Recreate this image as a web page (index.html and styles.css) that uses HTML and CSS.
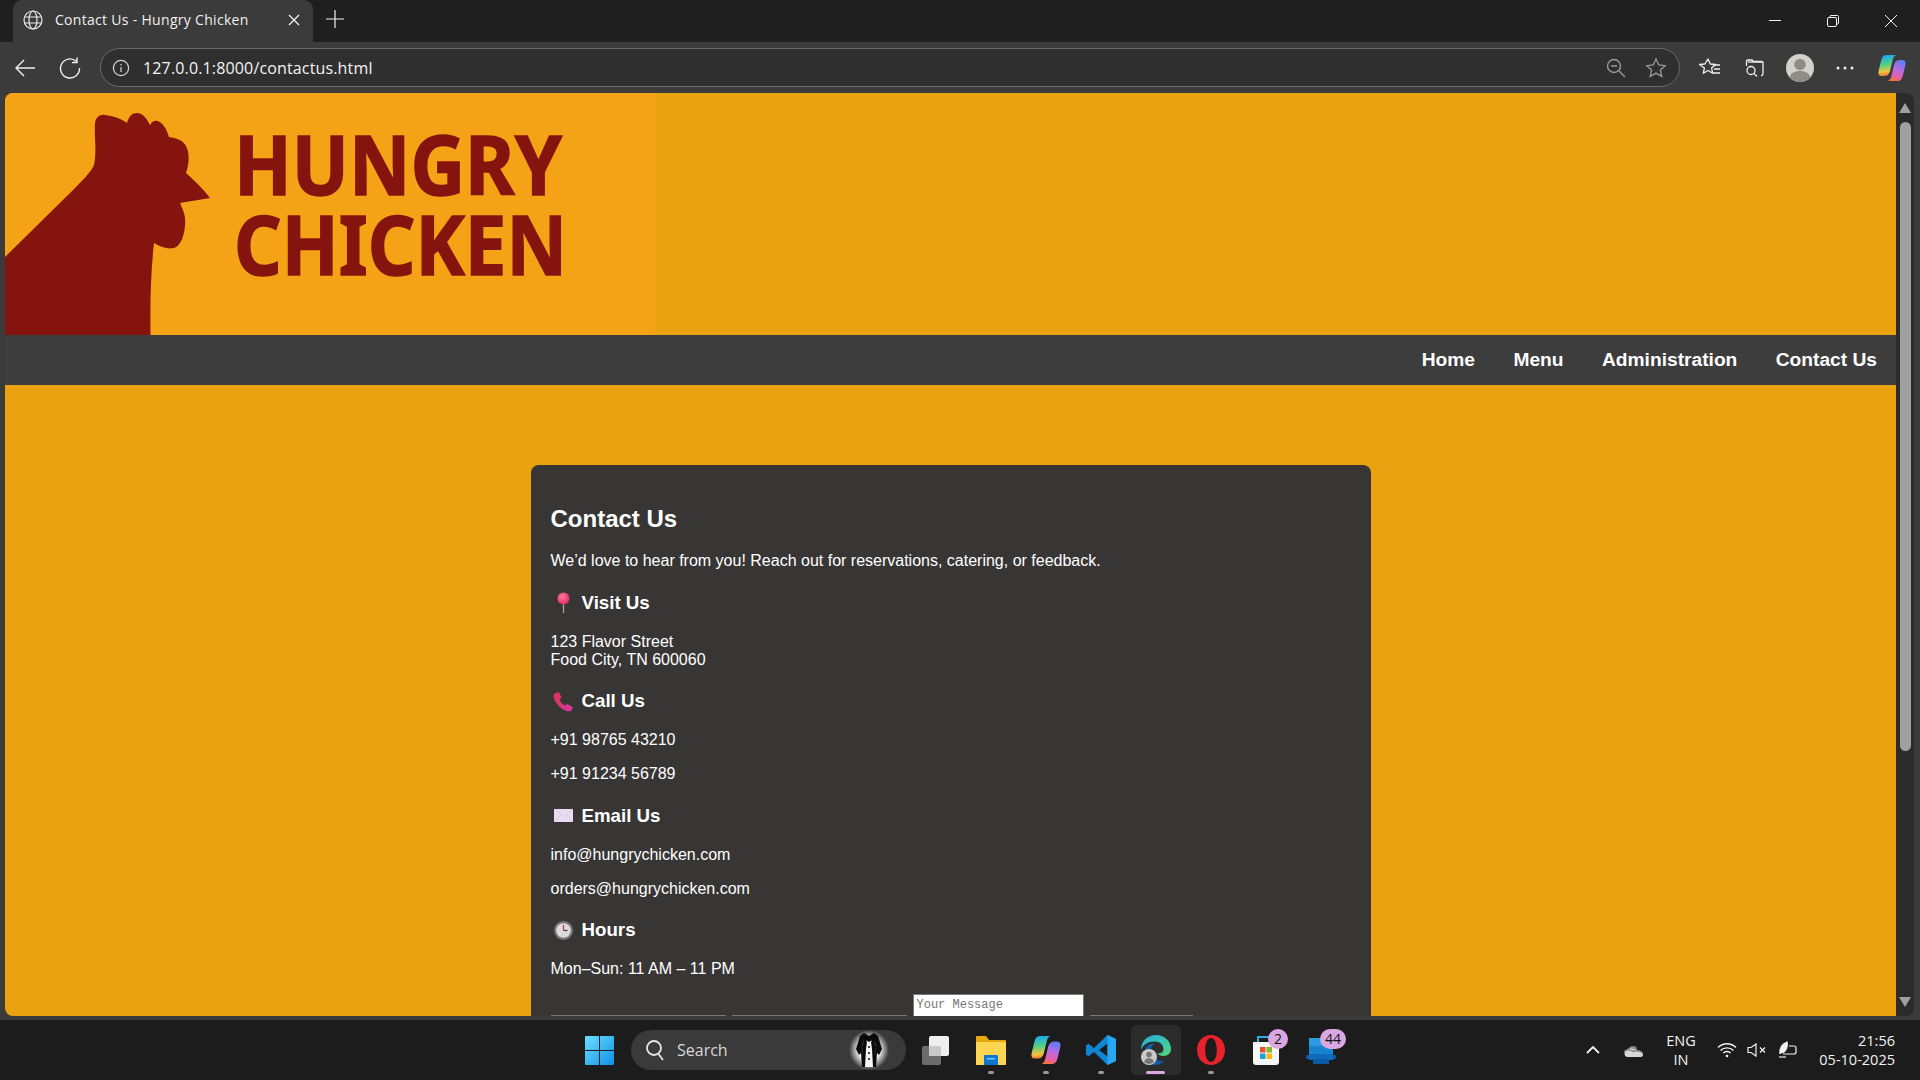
FILE: index.html
```html
<!DOCTYPE html>
<html lang="en">

<head>
    <meta charset="UTF-8">
    <title>Contact Us - Hungry Chicken</title>
    <link rel="stylesheet" href="styles.css">
</head>

<body>
    <div class="window">

        <!-- TAB STRIP -->
        <div class="tabstrip">
            <div class="tab">
                <svg class="tab-globe" width="20" height="20" viewBox="0 0 20 20" fill="none" stroke="#e8e8e8" stroke-width="1.2">
                    <circle cx="10" cy="10" r="9"/>
                    <ellipse cx="10" cy="10" rx="4" ry="9"/>
                    <path d="M1.6 7h16.8M1.6 13h16.8"/>
                </svg>
                <span class="tab-title">Contact Us - Hungry Chicken</span>
                <svg class="tab-close" width="12" height="12" viewBox="0 0 12 12" stroke="#f2f2f2" stroke-width="1.3">
                    <path d="M1 1l10 10M11 1L1 11"/>
                </svg>
            </div>
            <svg class="tab-new" width="18" height="18" viewBox="0 0 18 18" stroke="#f2f2f2" stroke-width="1.2">
                <path d="M9 0v18M0 9h18"/>
            </svg>
            <div class="win-controls">
                <div class="win-btn">
                    <svg width="14" height="14" viewBox="0 0 14 14" stroke="#f2f2f2" stroke-width="1"><path d="M1 6.5h12"/></svg>
                </div>
                <div class="win-btn">
                    <svg width="14" height="14" viewBox="0 0 14 14" fill="none" stroke="#f2f2f2" stroke-width="1"><rect x="1.5" y="3.5" width="9" height="9" rx="1.5"/><path d="M4 3.5V2.500q0-1 1-1h6.500q1 0 1 1V9q0 1-1 1h-1"/></svg>
                </div>
                <div class="win-btn">
                    <svg width="14" height="14" viewBox="0 0 14 14" stroke="#f2f2f2" stroke-width="1"><path d="M1 1l12 12M13 1L1 13"/></svg>
                </div>
            </div>
        </div>

        <!-- TOOLBAR -->
        <div class="toolbar">
            <div class="tool-btn">
                <svg width="22" height="20" viewBox="0 0 22 20" fill="none" stroke="#f0f0f0" stroke-width="1.4"><path d="M21 10H2M10 2l-8 8 8 8"/></svg>
            </div>
            <div class="tool-btn">
                <svg width="22" height="22" viewBox="0 0 22 22" fill="none" stroke="#f0f0f0" stroke-width="1.4"><path d="M17.500 4.500A9.500 9.500 0 1 0 20.500 11"/><path d="M18 0.500v5h-5"/></svg>
            </div>
            <div class="address-bar">
                <svg width="18" height="18" viewBox="0 0 18 18" fill="none" stroke="#d6d6d6" stroke-width="1.2"><circle cx="9" cy="9" r="7.600"/><path d="M9 8v5M9 5v1.400"/></svg>
                <span class="url">127.0.0.1:8000/contactus.html</span>
                <svg class="addr-zoom" width="20" height="20" viewBox="0 0 20 20" fill="none" stroke="#9a9a9a" stroke-width="1.4"><circle cx="8" cy="8" r="6.500"/><path d="M5 8h6M13 13l6 6"/></svg>
                <svg class="addr-star" width="22" height="22" viewBox="0 0 22 22" fill="none" stroke="#9a9a9a" stroke-width="1.3"><path d="M11 2l2.800 6 6.400.7-4.800 4.300 1.400 6.400-5.800-3.300-5.800 3.300 1.400-6.400L1.800 8.700 8.200 8z"/></svg>
            </div>
            <div class="tool-group">
                <div class="tool-btn">
                    <svg width="24" height="22" viewBox="0 0 24 22" fill="none" stroke="#f0f0f0" stroke-width="1.3"><path d="M10 2l2.300 5 5.200.5-3.900 3.500 1 5.200-4.600-2.700-4.700 2.700 1.100-5.200L1.500 7.500 6.800 7z" stroke-linejoin="round"/><path d="M15 8h7M16 12h6M15 16h7"/></svg>
                </div>
                <div class="tool-btn">
                    <svg width="20" height="20" viewBox="0 0 20 20" fill="none" stroke="#f0f0f0" stroke-width="1.3"><path d="M1.500 8V3.500q0-1.500 1.500-1.500h4l1.500 1.500h8q1.500 0 1.500 1.500v11q0 1.500-1.500 1.500H16"/><path d="M3 4h15"/><circle cx="6" cy="12.500" r="4"/><path d="M9 15.500l3 3"/></svg>
                </div>
                <div class="tool-btn">
                    <svg width="28" height="28" viewBox="0 0 28 28"><circle cx="14" cy="14" r="14" fill="#d2d1cc"/><circle cx="14" cy="10.500" r="5.800" fill="#8f8d88"/><path d="M3.500 23.500C5 18.500 9 17 14 17s9 1.500 10.500 6.500A14 14 0 0 1 14 28 14 14 0 0 1 3.500 23.500z" fill="#8f8d88"/></svg>
                </div>
                <div class="tool-btn">
                    <svg width="18" height="4" viewBox="0 0 18 4" fill="#f0f0f0"><circle cx="2" cy="2" r="1.500"/><circle cx="9" cy="2" r="1.500"/><circle cx="16" cy="2" r="1.500"/></svg>
                </div>
                <div class="tool-btn tool-copilot">
                    <svg width="28" height="26" viewBox="0 0 28 26"><use href="#copilot"/></svg>
                </div>
            </div>
        </div>

        <!-- BROWSER VIEW -->
        <div class="view">
            <div class="page">
                <header class="site-header">
                    <svg class="logo" width="650" height="242" viewBox="5 93 650 242">
                        <rect x="5" y="93" width="650" height="242" fill="#f4a216"/>
                        <path fill="#85140f" d="M5 257L70 193C82 181 91 172 94 165 97 150 94 136 95 123 96 117 100 114 105 115 113 116 120 118 127 123 129 116 132 113 137 113 143 113 147 119 150 125 152 121 155 120 158 121 164 124 167 130 169 137 176 138 183 140 186 146 190 153 189 165 186 173 195 181 204 190 210 198L180 203C184 212 186 217 185 226 184 236 181 244 176 247 171 250 162 248 154 243 151 270 150 300 150.500 335H5z"/>
                        <text class="logo-text" x="234" y="195" textLength="328" lengthAdjust="spacingAndGlyphs">HUNGRY</text>
                        <text class="logo-text" x="234" y="275" textLength="333" lengthAdjust="spacingAndGlyphs">CHICKEN</text>
                    </svg>
                </header>

                <nav class="site-nav">
                    <a href="#">Home</a>
                    <a href="#">Menu</a>
                    <a href="#">Administration</a>
                    <a href="#">Contact Us</a>
                </nav>

                <main class="contact-card">
                    <h2>Contact Us</h2>
                    <p>We’d love to hear from you! Reach out for reservations, catering, or feedback.</p>

                    <h3>
                        <svg width="25" height="23" viewBox="0 0 25 23">
                            <defs><radialGradient id="pin" cx="0.4" cy="0.35" r="0.7"><stop offset="0" stop-color="#ff7d9c"/><stop offset="1" stop-color="#e0245e"/></radialGradient></defs>
                            <path d="M12.500 12v10" stroke="#a8a8a8" stroke-width="1.200"/>
                            <circle cx="12.500" cy="7.500" r="6" fill="url(#pin)"/>
                        </svg>
                        Visit Us
                    </h3>
                    <p>123 Flavor Street<br>Food City, TN 600060</p>

                    <h3>
                        <svg width="25" height="23" viewBox="0 0 25 23">
                            <defs><linearGradient id="phone" x1="0" y1="0" x2="1" y2="1"><stop offset="0" stop-color="#d9344f"/><stop offset="1" stop-color="#d838a6"/></linearGradient></defs>
                            <path fill="url(#phone)" d="M3.500 3.500L8 2l2.500 5.500-2 2c1 2.800 3 5 5.800 6l2.200-1.800 5.500 3.800-1.500 3c-1 .8-3 1-5 .5C9 18.500 3.500 12.500 2.500 6.500c-.1-1.200.2-2.300 1-3z"/>
                        </svg>
                        Call Us
                    </h3>
                    <p>+91 98765 43210</p>
                    <p>+91 91234 56789</p>

                    <h3>
                        <svg width="25" height="23" viewBox="0 0 25 23">
                            <rect x="3" y="5" width="19" height="13" fill="#e9dcf2"/>
                            <path d="M3 5l9.500 7L22 5M3 18l7-7M22 18l-7-7" fill="none" stroke="#d5c3e2" stroke-width="0.800"/>
                        </svg>
                        Email Us
                    </h3>
                    <p>info@hungrychicken.com</p>
                    <p>orders@hungrychicken.com</p>

                    <h3>
                        <svg width="25" height="23" viewBox="0 0 25 23">
                            <circle cx="12.500" cy="11.500" r="9.500" fill="#77757a"/>
                            <circle cx="12.500" cy="11.500" r="7.300" fill="#dcdadd"/>
                            <path d="M12.500 11.500V6" stroke="#d9304f" stroke-width="1.300"/>
                            <path d="M12.500 11.500h4" stroke="#444" stroke-width="1.300"/>
                        </svg>
                        Hours
                    </h3>
                    <p>Mon–Sun: 11 AM – 11 PM</p>

                    <form class="contact-form">
                        <input class="field field-name" type="text">
                        <input class="field field-email" type="email">
                        <textarea class="field-message" placeholder="Your Message"></textarea>
                        <input class="field field-send" type="text">
                    </form>
                </main>
            </div>

            <div class="scrollbar">
                <div class="arrow-up"></div>
                <div class="thumb"></div>
                <div class="arrow-down"></div>
            </div>
        </div>

        <!-- TASKBAR -->
        <div class="taskbar">
            <svg class="start" width="29" height="29" viewBox="0 0 29 29">
                <defs><linearGradient id="winblue" x1="0" y1="0" x2="1" y2="1"><stop offset="0" stop-color="#6ce0ff"/><stop offset="1" stop-color="#0f8fe6"/></linearGradient></defs>
                <path fill="url(#winblue)" d="M1 0h13v14H0V1q0-1 1-1zM15 0h13q1 0 1 1v13H15zM0 15h14v14H1q-1 0-1-1zM15 15h14v13q0 1-1 1H15z"/>
            </svg>

            <div class="search-pill">
                <svg width="20" height="22" viewBox="0 0 20 22" fill="none" stroke="#e6e6e6" stroke-width="1.800"><circle cx="9" cy="9" r="7"/><path d="M13.500 15l4.500 6"/></svg>
                <span class="search-label">Search</span>
                <svg class="tux" width="40" height="40" viewBox="0 0 40 40">
                    <defs><radialGradient id="glow"><stop offset="0.5" stop-color="#fff"/><stop offset="1" stop-color="#fff" stop-opacity="0"/></radialGradient></defs>
                    <circle cx="20" cy="20" r="20" fill="url(#glow)"/>
                    <path d="M11 6l4-3 5 3 5-3 4 3 4 13-3 6-2-2-1 14H13l-1-14-2 2-3-6z" fill="#0b0b0b"/>
                    <path d="M15.500 9l4.500 3 4.500-3 2.500 7-2 21H15l-2-21z" fill="#f6f6f6"/>
                    <path d="M15.500 9l2.500 3-1 7-1 18h-2l-1-21zM24.500 9L22 12l1 7 1 18h2l1-21z" fill="#0b0b0b"/>
                    <path d="M14.500 6l5.500 2.500L25.500 6v6L20 9.500 14.500 12z" fill="#0b0b0b"/>
                    <circle cx="20" cy="17" r="1" fill="#0b0b0b"/><circle cx="20" cy="23" r="1" fill="#0b0b0b"/><circle cx="20" cy="29" r="1" fill="#0b0b0b"/>
                </svg>
            </div>

            <div class="task-apps">
                <div class="task-app">
                    <svg width="30" height="30" viewBox="0 0 30 30"><rect x="1" y="11" width="19" height="19" rx="2" fill="#6c6c6c"/><rect x="8" y="1" width="20" height="20" rx="2" fill="#efefef"/><rect x="8" y="11" width="12" height="10" fill="#c9c9c9"/></svg>
                </div>
                <div class="task-app running">
                    <svg width="30" height="30" viewBox="0 0 30 30"><path d="M0 2q0-1 1-1h9l3 4h16q1 0 1 1v23q0 1-1 1H1q-1 0-1-1z" fill="#e9a90e"/><path d="M0 7h30v22q0 1-1 1H1q-1 0-1-1z" fill="#fcd653"/><path d="M8 21q0-1 1-1h12q1 0 1 1v9H8z" fill="#0d78d1"/><path d="M11 23h8v1.500h-8z" fill="#7cc6f5"/></svg>
                </div>
                <div class="task-app running">
                    <svg width="30" height="30" viewBox="0 0 30 30"><use href="#copilot"/></svg>
                </div>
                <div class="task-app running">
                    <svg width="30" height="30" viewBox="0 0 30 30"><path d="M21.500 0L30 4v22l-8.500 4L8 17l-5.500 4.300L0 19.500v-9L2.500 8.700 8 13zM21.500 8.500L13 15l8.500 6.500z" fill="#0e86d4"/><path d="M21.500 0L30 4v22l-8.500 4z" fill="#27a7ef"/></svg>
                </div>
                <div class="task-app active">
                    <svg width="30" height="30" viewBox="0 0 30 30">
                        <defs><linearGradient id="edge" x1="0" y1="0" x2="1" y2="1"><stop offset="0" stop-color="#2aa7e0"/><stop offset="0.6" stop-color="#3ac9a8"/><stop offset="1" stop-color="#55d46e"/></linearGradient></defs>
                        <path fill="url(#edge)" d="M15 0c9 0 15 6.500 15 14 0 4-3 7-7.500 7-2.800 0-5.500-1-6-2.500 4 0 6-1.500 6-4.500 0-4-3.500-7.500-8.500-7.500C7 6.500 2 9.500 0 15 0 6.500 6 0 15 0z"/>
                        <path fill="#0e5fb0" d="M4 16c1-5 5-8 9-7-3 2-4 5-3 9 1.500 6 7.500 9 13 7.500-2.500 3-6 4.500-9 4.500C8 30 2.500 24 4 16z"/>
                        <circle cx="8" cy="22" r="8" fill="#c9c9c9"/><circle cx="8" cy="19.500" r="2.800" fill="#777"/><path d="M3 27c1-3 3-4 5-4s4 1 5 4a8 8 0 0 1-10 0z" fill="#777"/>
                    </svg>
                </div>
                <div class="task-app running">
                    <svg width="30" height="30" viewBox="0 0 30 30"><path fill="#e8222b" fill-rule="evenodd" d="M15 0c8 0 14 6.500 14 15s-6 15-14 15S1 23.500 1 15 7 0 15 0zm0 3c-3.500 0-5.800 5.500-5.800 12S11.500 27 15 27s5.800-5.500 5.800-12S18.500 3 15 3z"/></svg>
                </div>
                <div class="task-app">
                    <svg width="30" height="30" viewBox="0 0 30 30"><path d="M7 7V2h14" fill="none" stroke="#35a8e0" stroke-width="2"/><path d="M2 7h26v20q0 3-3 3H5q-3 0-3-3z" fill="#f6f6f6"/><rect x="9" y="12" width="5.500" height="5.500" fill="#e8532c"/><rect x="15.500" y="12" width="5.500" height="5.500" fill="#7fba2a"/><rect x="9" y="18.500" width="5.500" height="5.500" fill="#1ba1e2"/><rect x="15.500" y="18.500" width="5.500" height="5.500" fill="#fdb813"/></svg>
                    <span class="badge">2</span>
                </div>
                <div class="task-app">
                    <svg width="30" height="30" viewBox="0 0 30 30"><rect x="0" y="20" width="30" height="4" rx="1" fill="#0a5aa6"/><rect x="3" y="3" width="24" height="8" fill="#2a9be0"/><rect x="3" y="11" width="24" height="8" fill="#1683cf"/><rect x="3" y="19" width="24" height="6" fill="#0f6cbd"/><rect x="7" y="24" width="16" height="5" fill="#0a5aa6"/></svg>
                    <span class="badge badge-wide">44</span>
                </div>
            </div>

            <div class="tray">
                <svg class="tray-chevron" width="14" height="8" viewBox="0 0 14 8" fill="none" stroke="#f2f2f2" stroke-width="1.800"><path d="M1 7l6-6 6 6"/></svg>
                <svg class="tray-cloud" width="20" height="13" viewBox="0 0 20 13"><path d="M5 7a5 5 0 0 1 9-3l-2 3z" fill="#8a8a8a"/><path d="M4 13a4 4 0 0 1 0-7.500c3-1.500 6-1 7 0 2-.5 3 .2 4 1.500 3 0 5 1.500 5 3.500 0 1.500-1 2.500-2 2.500z" fill="#d8d8d8"/><path d="M1 7.500c3-2 8-2 9 0 2-1 6-1 9 1" fill="none" stroke="#8a8a8a" stroke-width="1.500"/></svg>
                <div class="tray-lang"><span>ENG</span><span>IN</span></div>
                <svg class="tray-wifi" width="20" height="16" viewBox="0 0 20 16" fill="none" stroke="#f2f2f2" stroke-width="1.400"><path d="M1 5.500c5-5 13-5 18 0M3.500 8.500c3.500-3.500 9.500-3.500 13 0M6.300 11c2-2 5.400-2 7.400 0"/><circle cx="10" cy="14" r="1.300" fill="#f2f2f2" stroke="none"/></svg>
                <svg class="tray-sound" width="20" height="14" viewBox="0 0 20 14" fill="none" stroke="#f2f2f2" stroke-width="1.200"><path d="M1 4.500h3L9 1v12L4 9.500H1z"/><path d="M13 4.500l5 5M18 4.500l-5 5"/></svg>
                <svg class="tray-battery" width="20" height="18" viewBox="0 0 20 18" fill="none" stroke="#f2f2f2" stroke-width="1.200"><path d="M11 5h5q2 0 2 2v4q0 2-2 2H5"/><path d="M2 13c-1-5 2-10 7-12 1 4 0 9-5 11" fill="#f2f2f2"/><path d="M1 16h7"/></svg>
                <div class="tray-clock"><span>21:56</span><span>05-10-2025</span></div>
            </div>
        </div>
    </div>

    <!-- shared copilot mark -->
    <svg width="0" height="0" class="defs-holder">
        <defs>
            <linearGradient id="copA" x1="0.3" y1="0" x2="0.4" y2="1"><stop offset="0" stop-color="#1aa6f0"/><stop offset="0.45" stop-color="#4fd08a"/><stop offset="0.8" stop-color="#f2c53a"/><stop offset="1" stop-color="#f0703a"/></linearGradient>
            <linearGradient id="copB" x1="0.7" y1="0" x2="0.4" y2="1"><stop offset="0" stop-color="#5a7cf0"/><stop offset="0.4" stop-color="#b06be8"/><stop offset="0.8" stop-color="#e85fa8"/><stop offset="1" stop-color="#f4723c"/></linearGradient>
            <symbol id="copilot" viewBox="0 0 28 26">
                <path fill="url(#copA)" d="M8 0h10c-2 1-3 3-3.500 5.500L12 16c-.8 3-2.500 5-5.500 5H3.500C1 21 0 19 .5 16.500L3 6C4 2 5.500 0 8 0z"/>
                <path fill="url(#copB)" d="M20 26H10c2-1 3-3 3.500-5.500L16 10c.8-3 2.500-5 5.500-5h3c2.500 0 3.500 2 3 4.500L25 20c-1 4-2.500 6-5 6z"/>
            </symbol>
        </defs>
    </svg>
</body>

</html>
```

FILE: styles.css
```css
/* RESET */
* {
    margin: 0;
    padding: 0;
    box-sizing: border-box;
}

body {
    width: 1920px;
    height: 1080px;
    overflow: hidden;
    background-color: #1c1c1c;
    font-family: "Liberation Sans", Arial, sans-serif;
}

.defs-holder {
    position: absolute;
}

.window {
    display: flex;
    flex-direction: column;
    height: 1080px;
}

/* TAB STRIP */
.tabstrip {
    display: flex;
    align-items: center;
    height: 42px;
    background-color: #1f1f1f;
    color: #f0f0f0;
}

.tab {
    display: flex;
    align-items: center;
    align-self: flex-end;
    width: 300px;
    height: 42px;
    margin-left: 13px;
    padding: 0 13px 3px 10px;
    background-color: #3b3b3b;
    border-radius: 9px 9px 0 0;
}

.tab-title {
    flex: 1;
    margin-left: 12px;
    font-family: "Open Sans", sans-serif;
    font-size: 14px;
    letter-spacing: 0.3px;
    white-space: nowrap;
}

.tab-new {
    margin: -4px 0 0 13px;
}

.win-controls {
    display: flex;
    margin-left: auto;
}

.win-btn {
    display: flex;
    align-items: center;
    justify-content: center;
    width: 58px;
    height: 42px;
}

/* TOOLBAR */
.toolbar {
    display: flex;
    align-items: center;
    height: 51px;
    padding-left: 2px;
    background-color: #3b3b3b;
}

.tool-btn {
    display: flex;
    align-items: center;
    justify-content: center;
    width: 45px;
    height: 45px;
}

.tool-copilot {
    margin-left: 2px;
}

.address-bar {
    display: flex;
    align-items: center;
    width: 1580px;
    height: 39px;
    margin-left: 8px;
    padding: 0 8px 0 11px;
    border: 1px solid #6a6a6a;
    border-radius: 20px;
    background-color: #2f2f2f;
}

.url {
    flex: 1;
    margin-left: 13px;
    color: #f4f4f4;
    font-family: "Open Sans", sans-serif;
    font-size: 16px;
    letter-spacing: 0.15px;
}

.addr-star {
    margin: 0 4px 0 19px;
}

.tool-group {
    display: flex;
    margin-left: 7px;
}

/* BROWSER VIEW */
.view {
    display: flex;
    height: 927px;
    padding: 0 6px 4px 5px;
    background-color: #3b3b3b;
}

.page {
    flex: 1;
    overflow: hidden;
    background-color: #eaa210;
    border-radius: 8px 0 0 8px;
}

.site-header {
    height: 242px;
}

.logo {
    display: block;
}

.logo-text {
    fill: #85140f;
    stroke: #85140f;
    stroke-width: 1.5px;
    font-family: "Noto Sans", sans-serif;
    font-size: 83px;
    font-weight: 700;
}

.site-nav {
    display: flex;
    justify-content: flex-end;
    gap: 38.4px;
    height: 50px;
    padding: 14px 19px 0 0;
    background-color: #3d3d3d;
}

.site-nav a {
    color: #fff;
    font-size: 19.2px;
    font-weight: 700;
    text-decoration: none;
}

/* CONTACT CARD */
.contact-card {
    width: 840px;
    margin: 80px auto 0;
    padding: 20px;
    background-color: #383635;
    border-radius: 8px;
    color: #fff;
}

.contact-card h2 {
    margin: 20px 0 19px;
    font-size: 24px;
}

.contact-card p {
    margin: 16px 0;
    font-size: 16px;
}

.contact-card h3 {
    display: flex;
    align-items: center;
    gap: 6px;
    height: 25px;
    margin: 18.75px 0;
    padding-top: 3px;
    font-size: 18.72px;
}

.contact-form {
    display: flex;
    align-items: flex-start;
    gap: 6px;
    margin-top: 9px;
}

.field {
    height: 30px;
    margin-top: 21px;
    border: 1px solid #777;
    background-color: #fff;
}

.field-name,
.field-email {
    width: 175px;
}

.field-send {
    width: 103px;
}

.field-message {
    width: 171px;
    height: 40px;
    padding: 3px;
    border: 1px solid #777;
    background-color: #fff;
    font-family: "Liberation Mono", monospace;
    font-size: 12px;
}

/* SCROLLBAR */
.scrollbar {
    display: flex;
    flex-direction: column;
    align-items: center;
    width: 18px;
    padding: 10px 0 9px;
    background-color: #2b2b2b;
    border-radius: 0 8px 8px 0;
}

.arrow-up,
.arrow-down {
    width: 0;
    height: 0;
    border-left: 6.5px solid transparent;
    border-right: 6.5px solid transparent;
}

.arrow-up {
    border-bottom: 10px solid #a0a0a0;
}

.arrow-down {
    margin-top: auto;
    border-top: 10px solid #a0a0a0;
}

.thumb {
    width: 11px;
    height: 629px;
    margin-top: 9px;
    background-color: #a0a0a0;
    border-radius: 6px;
}

/* TASKBAR */
.taskbar {
    display: flex;
    align-items: center;
    flex: 1;
    padding-left: 585px;
    background-color: #1c1c1c;
    color: #f2f2f2;
}

.start {
    flex-shrink: 0;
}

.search-pill {
    display: flex;
    align-items: center;
    width: 275px;
    height: 40px;
    margin-left: 17px;
    padding: 0 17px 0 14px;
    background-color: #3a3a3a;
    border-radius: 20px;
}

.search-label {
    flex: 1;
    margin-left: 12px;
    font-family: "Open Sans", sans-serif;
    font-size: 16px;
    color: #d8d8d8;
}

.task-apps {
    display: flex;
    margin-left: 2px;
}

.task-app {
    position: relative;
    display: flex;
    align-items: center;
    justify-content: center;
    width: 55px;
    height: 50px;
}

.task-app > svg {
    position: relative;
}

.task-app.active::before {
    content: "";
    position: absolute;
    top: 0;
    bottom: 0;
    left: 2.5px;
    right: 2.5px;
    background-color: #2c2c2c;
    border-radius: 5px;
}

.task-app.running::after,
.task-app.active::after {
    content: "";
    position: absolute;
    bottom: 1px;
    left: 25px;
    width: 6px;
    height: 3px;
    background-color: #9a9a9a;
    border-radius: 2px;
}

.task-app.active::after {
    left: 18px;
    width: 19px;
    background-color: #dba7e2;
}

.badge {
    position: absolute;
    top: 4px;
    right: 5px;
    width: 20px;
    height: 20px;
    background-color: #dba7e2;
    border-radius: 50%;
    color: #111;
    font-family: "Open Sans", sans-serif;
    font-size: 14px;
    line-height: 20px;
    text-align: center;
}

.badge-wide {
    right: 2px;
    width: 26px;
    border-radius: 10px;
}

.tray {
    display: flex;
    align-items: center;
    margin-left: auto;
    padding-right: 25px;
    font-family: "Open Sans", sans-serif;
    font-size: 14.5px;
}

.tray-cloud {
    margin-left: 23px;
}

.tray-lang {
    display: flex;
    flex-direction: column;
    align-items: center;
    width: 36px;
    margin-left: 20px;
    line-height: 19px;
}

.tray-wifi {
    margin-left: 18px;
}

.tray-sound {
    margin-left: 10px;
}

.tray-battery {
    margin-left: 11px;
}

.tray-clock {
    display: flex;
    flex-direction: column;
    align-items: flex-end;
    width: 84px;
    margin-left: 13px;
    line-height: 19px;
}
```
